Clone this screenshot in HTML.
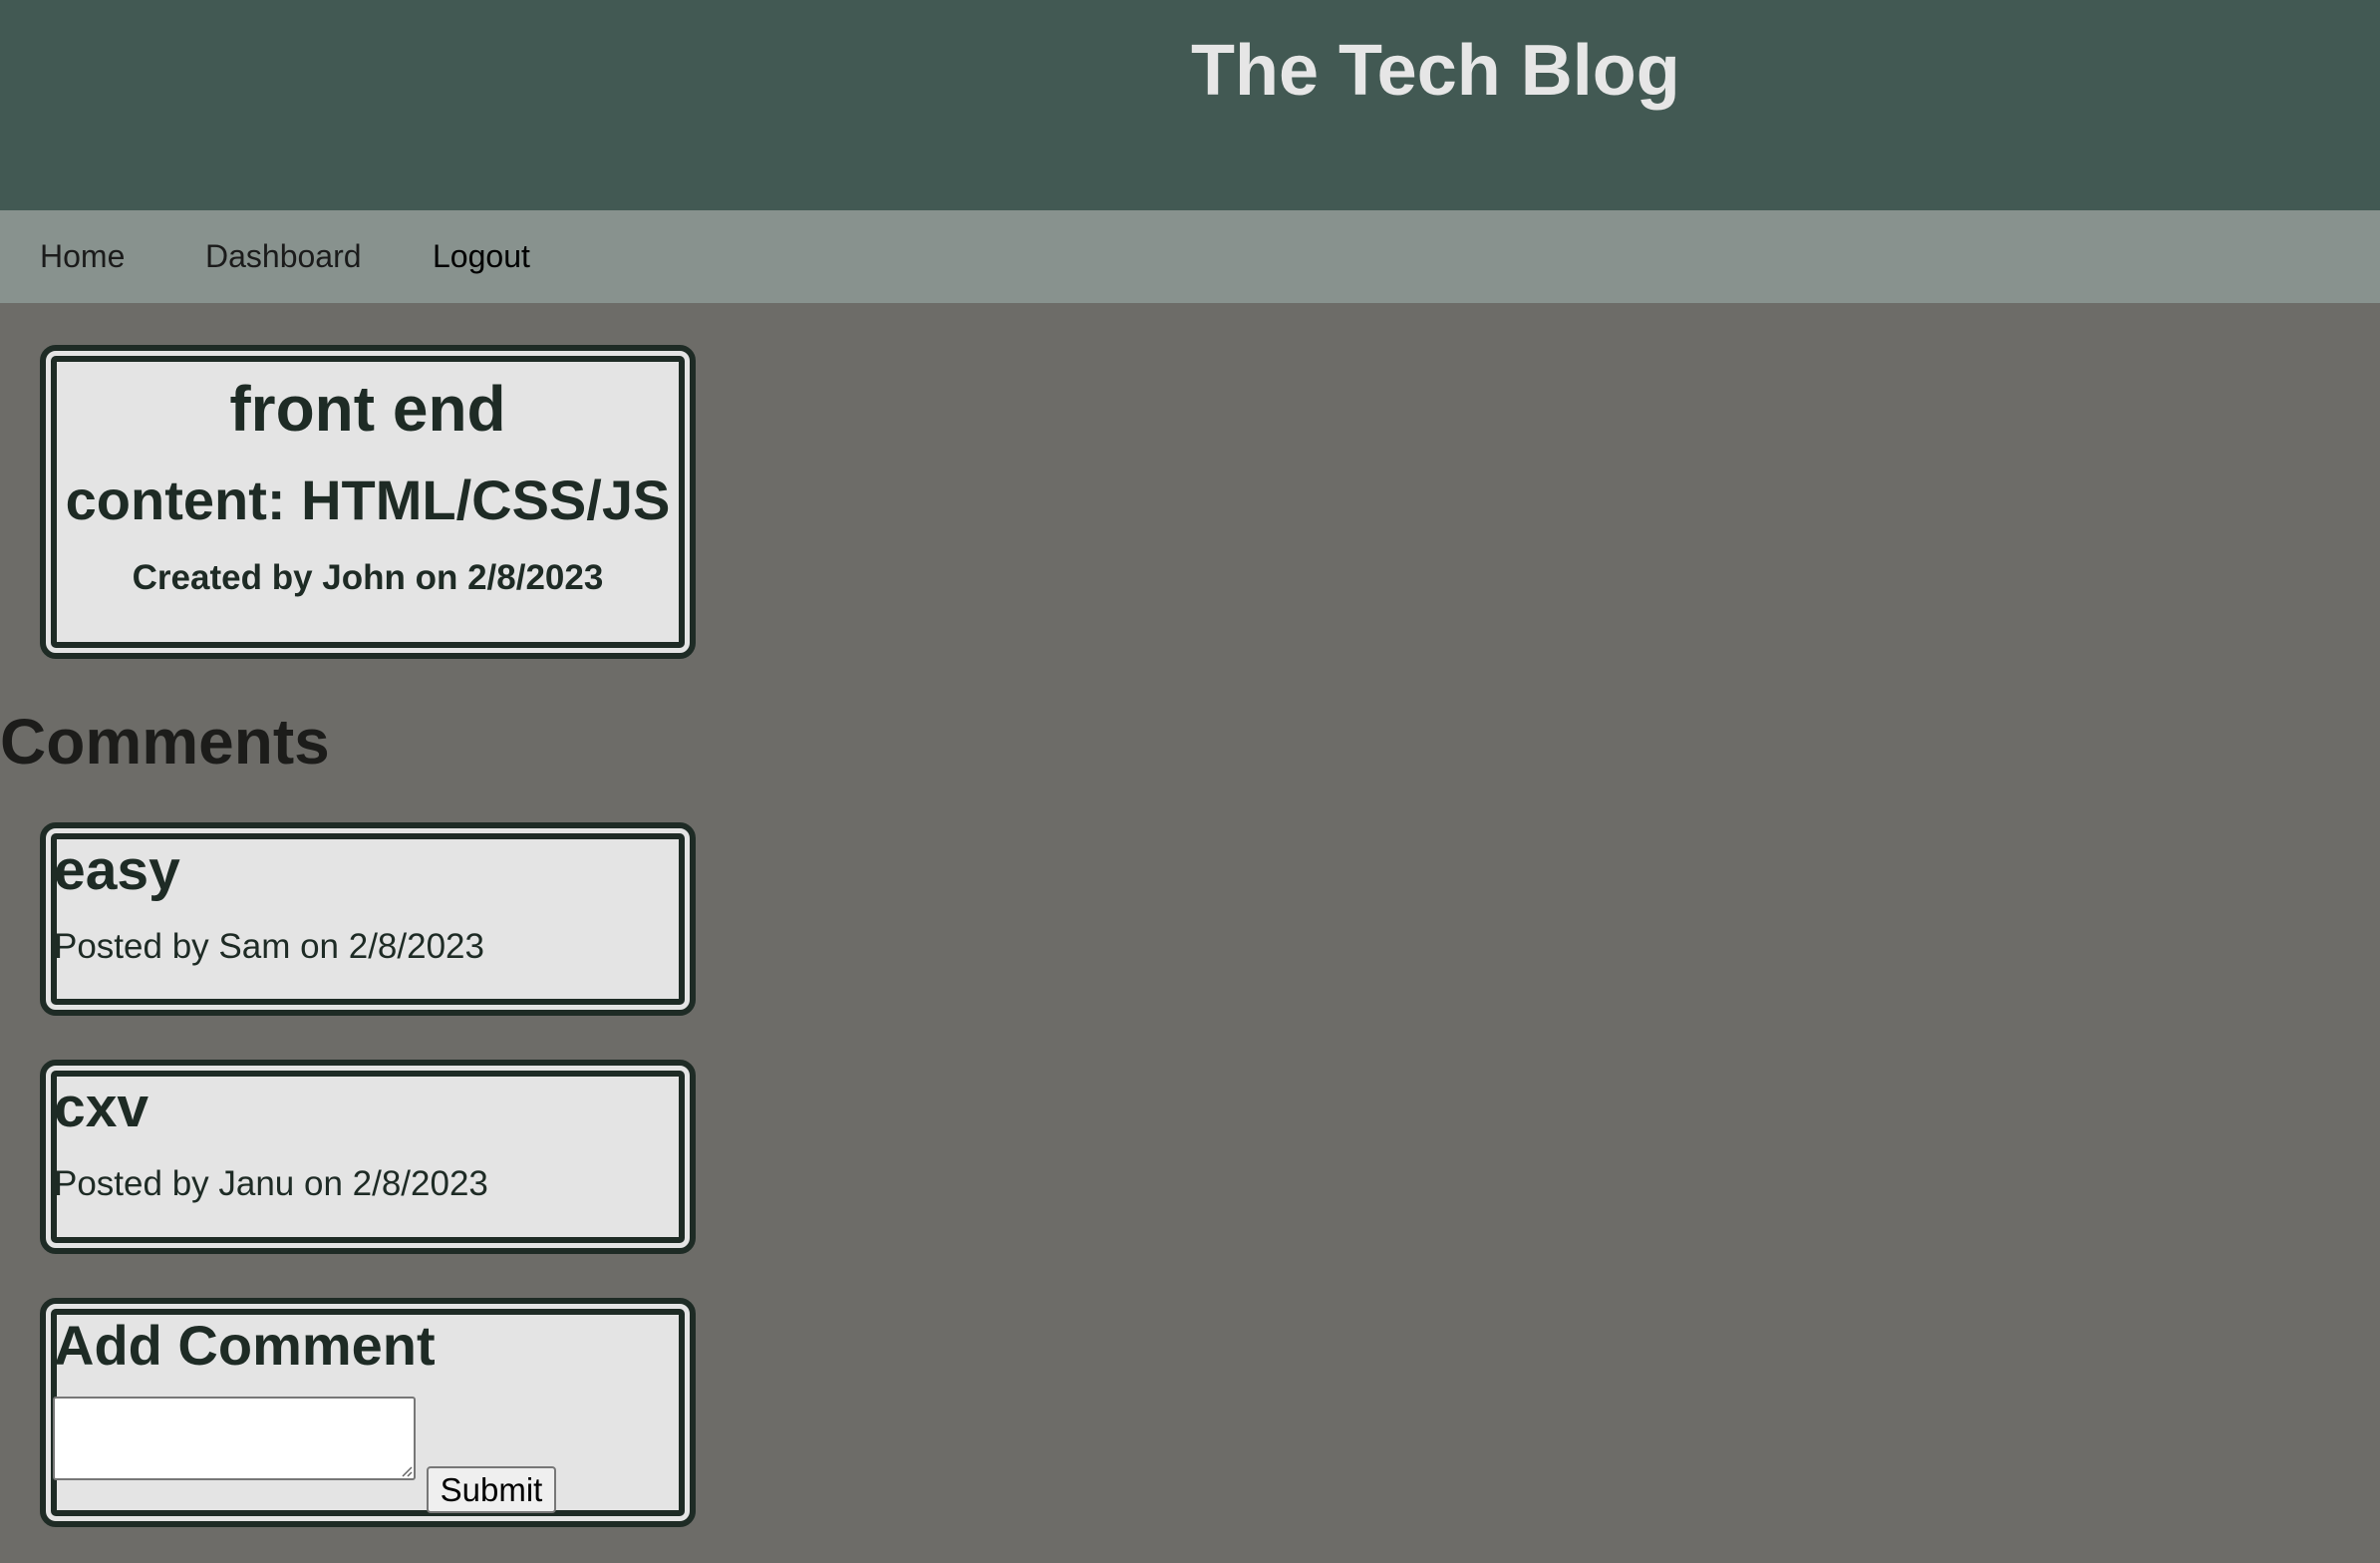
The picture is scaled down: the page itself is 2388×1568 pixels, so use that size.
<!DOCTYPE html>
<html><head><meta charset="utf-8"><style>
*{margin:0;padding:0;box-sizing:border-box}
body{width:2388px;height:1568px;background:#6d6c68;font-family:"Liberation Sans",Arial,sans-serif;position:relative;overflow:hidden}
.hdr{position:absolute;left:0;top:0;width:2388px;height:211px;background:#425953}
.title{position:absolute;left:1195px;top:26px;font-size:72px;font-weight:bold;color:#e6e6e6;line-height:90px;white-space:nowrap}
.nav{position:absolute;left:0;top:211px;width:2388px;height:93px;background:#88928e}
.nav span{position:absolute;top:26px;font-size:32px;line-height:40px;color:#1b1b1b}
.card{position:absolute;left:40px;width:658px;background:#e4e4e4;border:17px double #1e2b25;border-radius:16px;color:#1e2b25}
.t{position:absolute;white-space:nowrap;line-height:1}
.c{left:0;right:0;text-align:center}
</style></head><body>
<div class="hdr"><div class="title">The Tech Blog</div></div>
<div class="nav"><span style="left:40px">Home</span><span style="left:206px">Dashboard</span><span style="left:434px;color:#000">Logout</span></div>

<div class="card" style="top:346px;height:315px">
<div class="t c" style="top:15px;font-size:64px;font-weight:bold">front end</div>
<div class="t c" style="top:111px;font-size:56px;font-weight:bold">content: HTML/CSS/JS</div>
<div class="t c" style="top:199px;font-size:35px;font-weight:bold">Created by John on 2/8/2023</div>
</div>

<div class="t" style="left:0;top:712px;font-size:64px;font-weight:bold;color:#1c1c1a">Comments</div>

<div class="card" style="top:825px;height:194px">
<div class="t" style="left:-3px;top:3px;font-size:57px;font-weight:bold">easy</div>
<div class="t" style="left:-3px;top:90px;font-size:35px">Posted by Sam on 2/8/2023</div>
</div>
<div class="card" style="top:1063px;height:195px">
<div class="t" style="left:-3px;top:3px;font-size:57px;font-weight:bold">cxv</div>
<div class="t" style="left:-3px;top:90px;font-size:35px">Posted by Janu on 2/8/2023</div>
</div>
<div class="card" style="top:1302px;height:230px">
<div class="t" style="left:-3px;top:3px;font-size:56px;font-weight:bold">Add Comment</div>
</div>
<div style="position:absolute;left:53px;top:1401px;width:364px;height:84px;background:#fff;border:2px solid #777;border-radius:3px">
<svg style="position:absolute;right:1px;bottom:1px" width="12" height="12"><path d="M11 2L2 11M11 7L7 11" stroke="#666" stroke-width="1.5"/></svg></div>
<div style="position:absolute;left:428px;top:1471px;width:130px;height:47px;background:#efefef;border:2px solid #777;border-radius:4px;font-size:33px;line-height:43px;text-align:center;color:#000">Submit</div>
</body></html>
